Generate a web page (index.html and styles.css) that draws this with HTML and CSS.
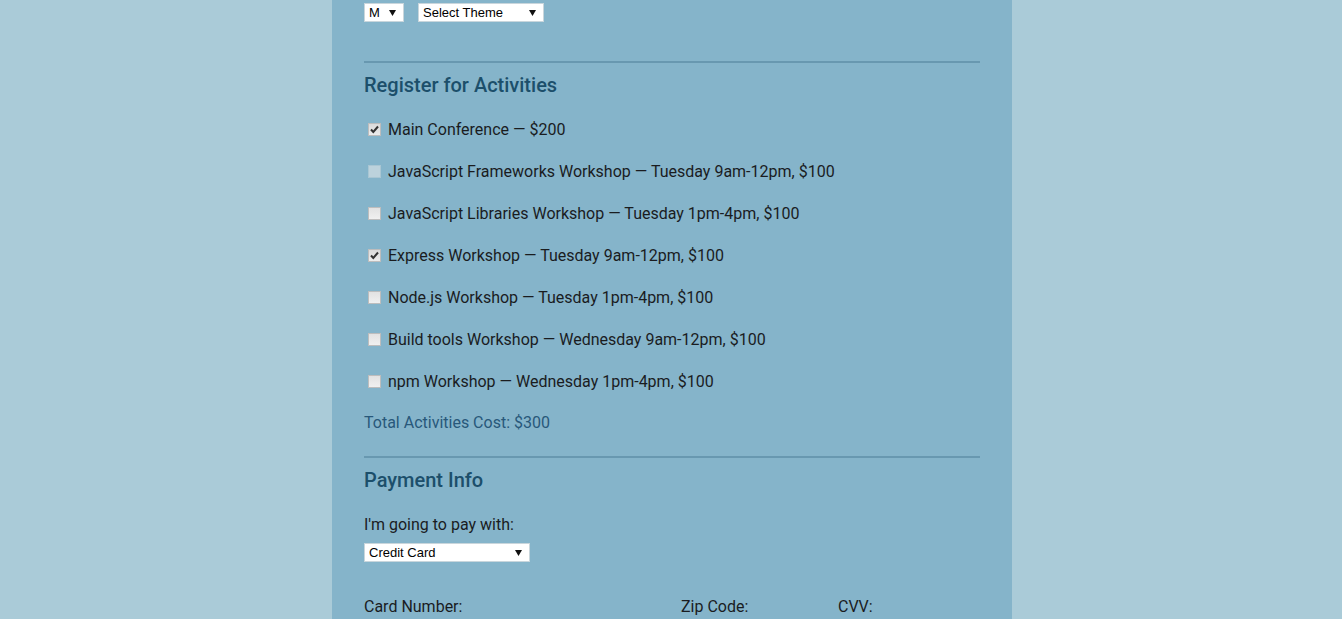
FILE: index.html
```html
<!DOCTYPE html>
<html lang="en">
<head>
<meta charset="utf-8">
<title>Register</title>
<link rel="stylesheet" href="styles.css">
</head>
<body>
<div class="container">
  <div class="shirt-row">
    <select class="sel sel-size"><option>M</option></select>
    <select class="sel sel-theme"><option>Select Theme</option></select>
  </div>
  <hr class="rule rule-first">
  <h2 class="heading">Register for Activities</h2>
  <div class="activities">
    <label class="activity"><input type="checkbox" checked> Main Conference — $200</label>
    <label class="activity"><input type="checkbox" disabled> JavaScript Frameworks Workshop — Tuesday 9am-12pm, $100</label>
    <label class="activity"><input type="checkbox"> JavaScript Libraries Workshop — Tuesday 1pm-4pm, $100</label>
    <label class="activity"><input type="checkbox" checked> Express Workshop — Tuesday 9am-12pm, $100</label>
    <label class="activity"><input type="checkbox"> Node.js Workshop — Tuesday 1pm-4pm, $100</label>
    <label class="activity"><input type="checkbox"> Build tools Workshop — Wednesday 9am-12pm, $100</label>
    <label class="activity"><input type="checkbox"> npm Workshop — Wednesday 1pm-4pm, $100</label>
  </div>
  <p class="total">Total Activities Cost: $300</p>
  <hr class="rule rule-second">
  <h2 class="heading">Payment Info</h2>
  <label class="pay-label">I'm going to pay with:</label>
  <select class="sel sel-pay"><option>Credit Card</option></select>
  <div class="card-grid">
    <label class="field-label">Card Number:</label>
    <label class="field-label">Zip Code:</label>
    <label class="field-label">CVV:</label>
  </div>
</div>
</body>
</html>
```

FILE: styles.css
```css
html, body {
  margin: 0;
  padding: 0;
  background: #aacbd8;
  height: 100%;
  overflow: hidden;
}

body {
  font-family: Roboto, "Liberation Sans", Arial, sans-serif;
  font-size: 16px;
  line-height: 24px;
  color: #1a1c1f;
}

.container {
  width: 680px;
  box-sizing: border-box;
  margin: 0 auto;
  padding: 3px 32px 40px 32px;
  background: #85b4ca;
  min-height: 100%;
  position: relative;
  left: 1px;
}

.shirt-row {
  display: flex;
  gap: 14px;
  height: 19px;
}

.sel {
  -webkit-appearance: none;
  appearance: none;
  box-sizing: border-box;
  height: 19px;
  margin: 0;
  padding: 0 14px 0 4px;
  border: 1px solid #c9d6dc;
  border-radius: 0;
  background-color: #ffffff;
  background-image: url("data:image/svg+xml,%3Csvg xmlns='http://www.w3.org/2000/svg' width='7' height='6'%3E%3Cpolygon points='0,0 7,0 3.5,6' fill='%23111'/%3E%3C/svg%3E");
  background-repeat: no-repeat;
  background-position: right 7px center;
  font-family: Arial, "Liberation Sans", sans-serif;
  font-size: 13px;
  line-height: 17px;
  color: #000;
  display: block;
}

.sel-size { width: 40px; }
.sel-theme { width: 126px; }
.sel-pay { width: 166px; margin-top: 6px; }

.rule {
  border: 0;
  height: 2px;
  background: #6898b0;
  margin: 0;
}

.rule-first { margin-top: 39px; }
.rule-second { margin-top: 21px; }

.heading {
  margin: 10px 0 0 0;
  font-size: 20px;
  line-height: 24px;
  font-weight: 500;
  color: #1c4f6b;
}

.activities {
  margin-top: 12px;
  display: flex;
  flex-direction: column;
}

.activity {
  display: flex;
  align-items: center;
  height: 42px;
  white-space: pre;
}

.activity input {
  -webkit-appearance: none;
  appearance: none;
  width: 13px;
  height: 13px;
  margin: 0 3px 0 4px;
  box-sizing: border-box;
  border: 1px solid #bdbdbd;
  background: linear-gradient(#e2e2e2, #f0f0f0);
  position: relative;
  top: -1px;
}

.activity input:checked {
  background-image: url("data:image/svg+xml,%3Csvg xmlns='http://www.w3.org/2000/svg' width='11' height='11'%3E%3Cpath d='M2 5.5 L4.3 8 L9 2.5' fill='none' stroke='%23333' stroke-width='2'/%3E%3C/svg%3E"), linear-gradient(#dadada, #ececec);
  background-repeat: no-repeat;
  background-position: center;
}

.activity input:disabled {
  border-color: #a9c6d3;
  background: #bcd2dc;
}

.total {
  margin: 8px 0 0 0;
  color: #28587a;
}

.pay-label {
  display: block;
  margin-top: 21px;
}

.card-grid {
  margin-top: 33px;
  display: grid;
  grid-template-columns: 317px 157px 1fr;
}

.field-label {
  display: block;
}
```
